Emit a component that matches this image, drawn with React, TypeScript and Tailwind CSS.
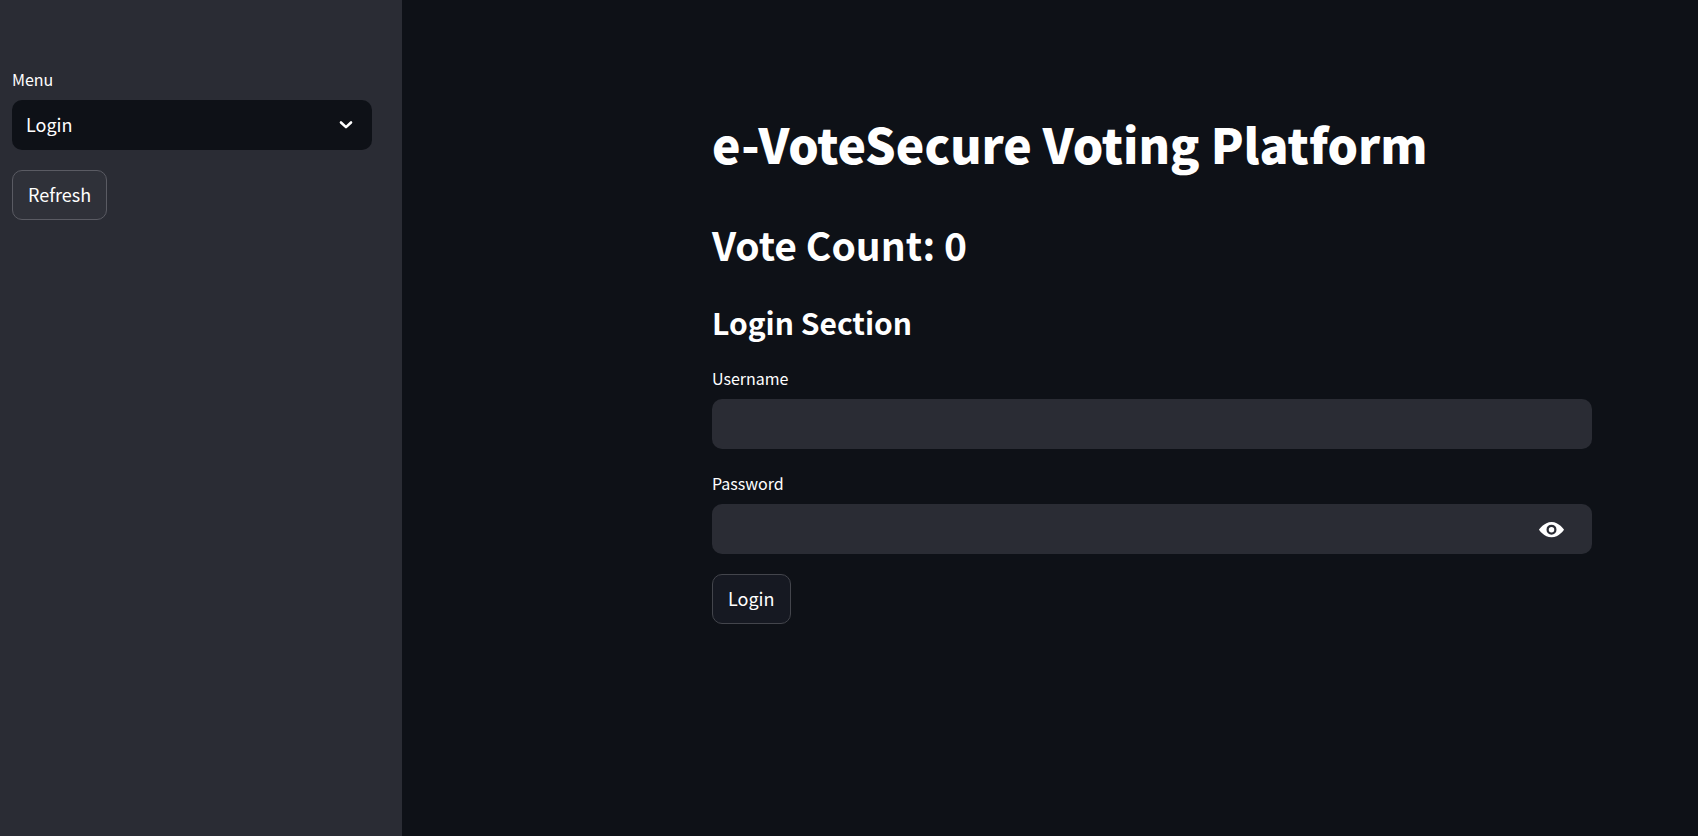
import { useState } from "react";

const labelClass = "block text-[16px] leading-[22px]";
const fieldClass =
  "h-[50px] w-full rounded-[10px] bg-[#2a2c34] px-3 text-[18px] text-white outline-none focus:ring-1 focus:ring-[#ff4b4b]";
const buttonClass =
  "h-[50px] self-start rounded-[10px] border px-[15px] pb-[2px] text-[18px] leading-6 text-white hover:border-[#ff4b4b] hover:text-[#ff4b4b]";

function EyeIcon() {
  return (
    <svg viewBox="0 0 8 8" className="size-[25px]" fill="currentColor" aria-hidden="true">
      <path d="M4.03 1.6C1.65 1.6 0 4.05 0 4.05s1.65 2.45 4.03 2.45C6.38 6.5 8 4.05 8 4.05S6.38 1.6 4.03 1.6zM4 2.45a1.6 1.6 0 1 1 0 3.2 1.6 1.6 0 0 1 0-3.2zm0 .72a.88.88 0 1 0 0 1.76.88.88 0 0 0 0-1.76z" />
    </svg>
  );
}

function ChevronIcon() {
  return (
    <svg
      viewBox="0 0 14 10"
      className="pointer-events-none absolute right-[19px] top-5 h-[10px] w-[14px]"
      fill="none"
      stroke="currentColor"
      strokeWidth="2.6"
      strokeLinecap="round"
      strokeLinejoin="round"
      aria-hidden="true"
    >
      <path d="M2 2.5l5 4.6 5-4.6" />
    </svg>
  );
}

function Sidebar() {
  return (
    <aside className="w-[402px] shrink-0 bg-[#2a2c34] pl-3 pr-[30px] pt-[68px]">
      <div className="flex flex-col gap-5">
        <div className="flex flex-col gap-[10px]">
          <label htmlFor="menu" className={labelClass}>
            Menu
          </label>
          <div className="relative">
            <select
              id="menu"
              className="h-[50px] w-full appearance-none rounded-[10px] bg-[#0e1117] px-[14px] pb-[2px] text-[18px] text-white outline-none"
            >
              <option>Login</option>
            </select>
            <ChevronIcon />
          </div>
        </div>
        <button type="button" className={`${buttonClass} border-[#5a5b63] bg-[#2f3139]`}>
          Refresh
        </button>
      </div>
    </aside>
  );
}

export default function App() {
  const [visible, setVisible] = useState(false);

  return (
    <div className="flex min-h-screen bg-[#0e1117] font-['Noto_Sans_CJK_SC',sans-serif] text-white">
      <Sidebar />
      <main className="flex flex-1 justify-end pl-8 pr-[106px] pt-[110px] pb-12">
        <div className="w-full max-w-[880px]">
          <h1 className="text-[48px] font-black leading-[66px]">e-VoteSecure Voting Platform</h1>
          <h2 className="mt-[41px] text-[39px] font-bold leading-[54px]">Vote Count: 0</h2>
          <h3 className="mt-[30px] text-[30px] font-bold leading-[42px]">Login Section</h3>
          <form className="mt-6 flex flex-col" onSubmit={(e) => e.preventDefault()}>
            <label htmlFor="username" className={labelClass}>
              Username
            </label>
            <input id="username" type="text" className={`${fieldClass} mt-[10px]`} />
            <label htmlFor="password" className={`${labelClass} mt-[23px]`}>
              Password
            </label>
            <div className="relative mt-[10px]">
              <input id="password" type={visible ? "text" : "password"} className={`${fieldClass} pr-16`} />
              <button
                type="button"
                aria-label="Show password text"
                onClick={() => setVisible(!visible)}
                className="absolute inset-y-0 right-7 flex items-center"
              >
                <EyeIcon />
              </button>
            </div>
            <button type="submit" className={`${buttonClass} mt-5 border-[#43454c] bg-[#161922]`}>
              Login
            </button>
          </form>
        </div>
      </main>
    </div>
  );
}
